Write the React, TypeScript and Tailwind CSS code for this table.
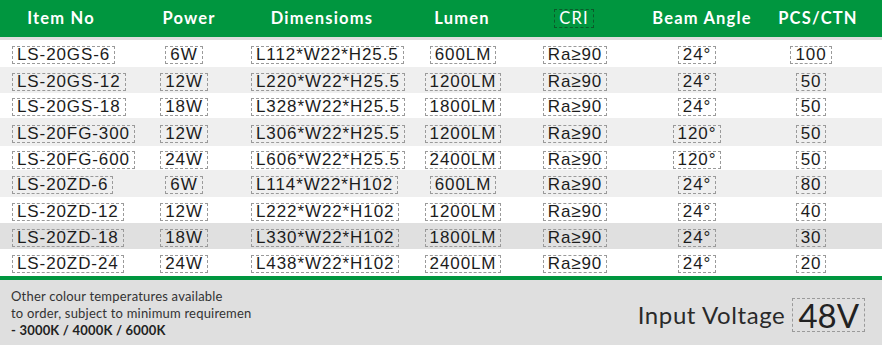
const rows = [
    { item: "LS-20GS-6", power: "6W", dim: "L112*W22*H25.5", lumen: "600LM", beam: "24°", pcs: "100", h: "h-[27px]", bg: "bg-white" },
    { item: "LS-20GS-12", power: "12W", dim: "L220*W22*H25.5", lumen: "1200LM", beam: "24°", pcs: "50", h: "h-[26px]", bg: "bg-[#efefef]" },
    { item: "LS-20GS-18", power: "18W", dim: "L328*W22*H25.5", lumen: "1800LM", beam: "24°", pcs: "50", h: "h-[25px]", bg: "bg-white" },
    { item: "LS-20FG-300", power: "12W", dim: "L306*W22*H25.5", lumen: "1200LM", beam: "120°", pcs: "50", h: "h-[28px]", bg: "bg-[#efefef]" },
    { item: "LS-20FG-600", power: "24W", dim: "L606*W22*H25.5", lumen: "2400LM", beam: "120°", pcs: "50", h: "h-[24px]", bg: "bg-white" },
    { item: "LS-20ZD-6", power: "6W", dim: "L114*W22*H102", lumen: "600LM", beam: "24°", pcs: "80", h: "h-[27px]", bg: "bg-[#efefef]" },
    { item: "LS-20ZD-12", power: "12W", dim: "L222*W22*H102", lumen: "1200LM", beam: "24°", pcs: "40", h: "h-[26px]", bg: "bg-white" },
    { item: "LS-20ZD-18", power: "18W", dim: "L330*W22*H102", lumen: "1800LM", beam: "24°", pcs: "30", h: "h-[26px]", bg: "bg-[#e0e0e0]" },
    { item: "LS-20ZD-24", power: "24W", dim: "L438*W22*H102", lumen: "2400LM", beam: "24°", pcs: "20", h: "h-[27px]", bg: "bg-white" },
];

const headers = [
    { label: "Item No", w: "w-[122px]" },
    { label: "Power", w: "w-[134px]" },
    { label: "Dimensioms", w: "w-[132px]" },
    { label: "Lumen", w: "w-[148px]" },
    { label: "CRI", w: "w-[76px]", boxed: true },
    { label: "Beam Angle", w: "w-[180px]" },
    { label: "PCS/CTN", w: "w-[52px]" },
];

// dashed "text box" around each value
const Box = ({ children }: { children: React.ReactNode }) => (
    <span className="inline-block whitespace-nowrap border border-dashed border-[#9a9a9a] px-[4px] leading-[16px] text-[17px] tracking-[0.9px] text-[#1c1c1c]">
        {children}
    </span>
);

const App = () => {
    return (
        <div className="w-[882px] h-[345px] overflow-hidden bg-white flex flex-col" style={{ fontFamily: '"Liberation Sans", Arial, sans-serif' }}>
            {/* Header */}
            <div className="h-[37px] bg-[#00963f] flex items-center shrink-0 text-white font-bold text-[16.5px] tracking-[1.2px]" style={{ fontFamily: 'Lato, "Open Sans", sans-serif' }}>
                {headers.map((h) => (
                    <div key={h.label} className={`${h.w} flex justify-center whitespace-nowrap`}>
                        {h.boxed ? (
                            <span className="border border-dashed border-[#0b5a2a] px-[4px] leading-[17px] font-normal">{h.label}</span>
                        ) : (
                            h.label
                        )}
                    </div>
                ))}
            </div>
            <div className="h-[3px] bg-[#dedede] shrink-0" />

            {/* Rows */}
            {rows.map((r) => (
                <div key={r.item} className={`${r.h} ${r.bg} flex items-center shrink-0 pt-[3px]`}>
                    <div className="w-[140px] pl-[12px] flex">
                        <Box>{r.item}</Box>
                    </div>
                    <div className="w-[88px] flex justify-center">
                        <Box>{r.power}</Box>
                    </div>
                    <div className="w-[177px] pl-[23px] flex">
                        <Box>{r.dim}</Box>
                    </div>
                    <div className="w-[116px] flex justify-center">
                        <Box>{r.lumen}</Box>
                    </div>
                    <div className="w-[108px] flex justify-center">
                        <Box>Ra≥90</Box>
                    </div>
                    <div className="w-[136px] flex justify-center">
                        <Box>{r.beam}</Box>
                    </div>
                    <div className="w-[92px] flex justify-center">
                        <Box>{r.pcs}</Box>
                    </div>
                </div>
            ))}

            <div className="h-[4px] bg-[#00963f] shrink-0" />

            {/* Footer */}
            <div className="flex-1 bg-[#dfdfdf] flex items-center justify-between pl-[11px] pr-[17px]" style={{ fontFamily: 'Lato, "Open Sans", sans-serif' }}>
                <div className="text-[13px] leading-[17px] tracking-[0.2px] text-[#333] pt-[2px]">
                    <p>Other colour temperatures available</p>
                    <p>to order, subject to minimum requiremen</p>
                    <p className="font-bold text-[#222]">- 3000K / 4000K / 6000K</p>
                </div>
                <div className="flex items-center gap-[7px] pt-[4px]">
                    <span className="text-[24px] text-[#2a2a2a] tracking-[0.6px]">Input Voltage</span>
                    <span className="border border-dashed border-[#9a9a9a] h-[34px] px-[5px] text-[33px] leading-[32px] text-[#222]">48V</span>
                </div>
            </div>
        </div>
    );
};

export default App;
